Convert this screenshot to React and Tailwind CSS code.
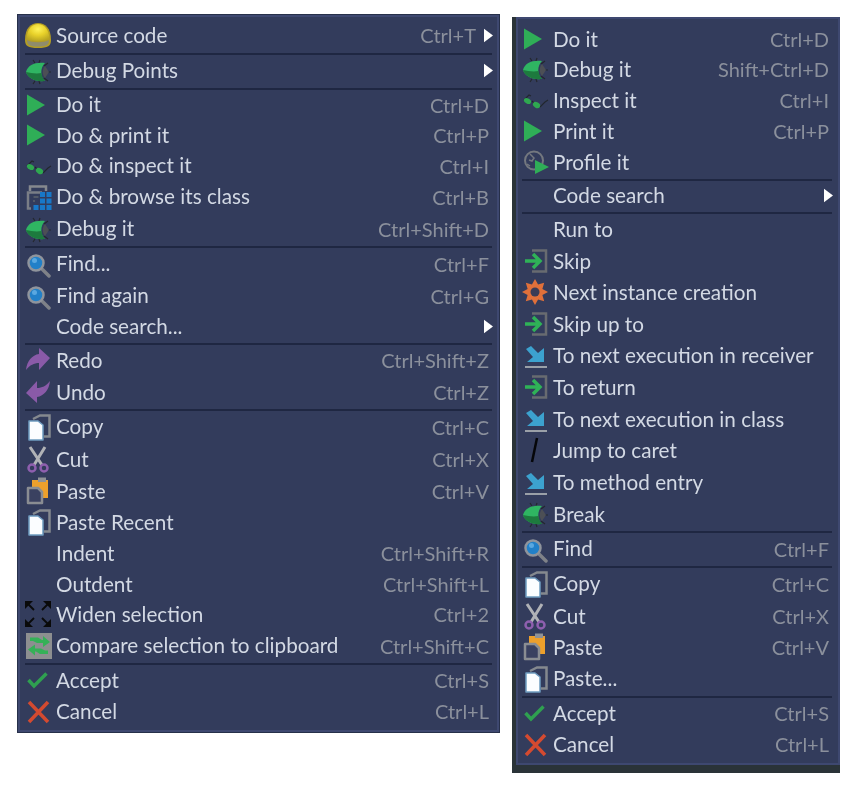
import React from "react";

const Play = () => (
  <svg viewBox="0 0 28 28" className="w-7 h-7">
    <path d="M3 3.500 L21 14 L3 24.500 Z" fill="#2fae57" />
  </svg>
);

const Bug = () => (
  <svg viewBox="0 0 28 28" className="w-7 h-7">
    <path d="M9 3 L11 6 M16 3 L15 6 M9 27 L11 24 M16 27 L15 24 M20 9 L24 6 M22 15 L27 15 M20 21 L24 24" stroke="#24282e" strokeWidth="1.200" fill="none" />
    <path d="M21 6 C11 5 4 8 2 15 C4 21 11 25 21 24 C16 20 16 11 21 6 Z" fill="#2fb562" />
    <path d="M2 15 C4 21 11 25 21 24 C19 22 18 19 17.500 16 C12 17 7 16 2 15 Z" fill="#1d7a3e" />
    <path d="M21 9 C18 12 18 18 21 21 L25 15 Z" fill="#4c4f55" />
  </svg>
);

const Glasses = () => (
  <svg viewBox="0 0 28 28" className="w-7 h-7">
    <path d="M3 14 L8 9 L10 10 M11 15 L13 17 M19 21 L24 16 L27 14" stroke="#22272e" strokeWidth="1.100" fill="none" />
    <ellipse cx="6.500" cy="15" rx="3.800" ry="2.600" fill="#2fa850" transform="rotate(30 6.500 15)" />
    <ellipse cx="15.500" cy="19" rx="3.800" ry="2.800" fill="#2fa850" transform="rotate(30 15.500 19)" />
  </svg>
);

const Browse = () => (
  <svg viewBox="0 0 28 28" className="w-7 h-7">
    <path d="M6 8 V3.500 H22 V8" fill="none" stroke="#85888e" strokeWidth="2.500" />
    <path d="M7 25.500 H4 V9.500 H18" fill="none" stroke="#7a7e86" strokeWidth="2.500" />
    <path d="M14.500 14 h-5 M11 18 h-2" stroke="#5f646c" strokeWidth="1.500" />
    <path d="M16 9 h5 v5 h-5 Z M22.500 9 h5 v5 h-5 Z M16 15.500 h5 v5 h-5 Z M22.500 15.500 h5 v5 h-5 Z M9.500 22 h5 v5 h-5 Z M16 22 h5 v5 h-5 Z M22.500 22 h5 v5 h-5 Z" fill="#1878c8" />
  </svg>
);

const Dome = () => (
  <svg viewBox="0 0 28 28" className="w-7 h-7">
    <defs>
      <radialGradient id="domeTop" cx="0.5" cy="0.3" r="0.7">
        <stop offset="0" stopColor="#fff35a" />
        <stop offset="0.5" stopColor="#e8d12a" />
        <stop offset="1" stopColor="#b9a522" />
      </radialGradient>
    </defs>
    <path d="M1 19 C1 7 7 2 14 2 C21 2 27 7 27 19 C27 25 24 27 14 27 C4 27 1 25 1 19 Z" fill="#b39d24" />
    <path d="M2.500 18 C3 8 8 3 14 3 C20 3 25 8 25.500 18 C20 21 8 21 2.500 18 Z" fill="url(#domeTop)" />
    <path d="M3 19 C8 22 20 22 25 19 C25 24 22 25.500 14 25.500 C6 25.500 3 24 3 19 Z" fill="#8f8c6c" />
  </svg>
);

const Magnifier = () => (
  <svg viewBox="0 0 28 28" className="w-7 h-7">
    <path d="M17 18 L25 26" stroke="#7f8288" strokeWidth="3.500" strokeLinecap="round" />
    <circle cx="12" cy="13" r="7.500" fill="#2280c8" stroke="#8f949c" strokeWidth="2.500" />
    <circle cx="10.500" cy="10.500" r="2.500" fill="#5aa8e0" />
  </svg>
);

const Redo = () => (
  <svg viewBox="0 0 28 28" className="w-7 h-7">
    <path d="M15 2 L26 12 L15 24 V17 C10 17 6 19 2 24 C3 15 8 9 15 8 Z" fill="#8a5aa8" />
  </svg>
);

const Undo = () => (
  <svg viewBox="0 0 28 28" className="w-7 h-7">
    <path d="M13 25 L2 15 L13 3 V10 C18 10 22 8 26 3 C25 12 20 18 13 19 Z" fill="#8a5aa8" />
  </svg>
);

const Copy = () => (
  <svg viewBox="0 0 28 28" className="w-7 h-7">
    <path d="M9 6 L16 2.500 H25.500 V23.500 H20" fill="none" stroke="#85898f" strokeWidth="2.500" />
    <path d="M5 8 H14 L19 12 V27 H5 Z" fill="#fbfdff" stroke="#6f9cc0" strokeWidth="1.500" strokeLinejoin="round" />
  </svg>
);

const Cut = () => (
  <svg viewBox="0 0 28 28" className="w-7 h-7">
    <path d="M6 2 L18 20 M21 2 L10 20" stroke="#b0b2b6" strokeWidth="3" />
    <circle cx="8" cy="23" r="3.500" fill="none" stroke="#8e5fae" strokeWidth="2.500" />
    <circle cx="20" cy="23" r="3.500" fill="none" stroke="#8e5fae" strokeWidth="2.500" />
  </svg>
);

const Paste = () => (
  <svg viewBox="0 0 28 28" className="w-7 h-7">
    <path d="M8 3 H24 V21 H8 Z" fill="#eda02c" />
    <path d="M14 0.500 H22 V5 H14 Z" fill="#8f9296" />
    <path d="M4 11 H14 L18 15 V26 H4 Z" fill="#3a4160" stroke="#8a8d92" strokeWidth="2.500" strokeLinejoin="round" />
  </svg>
);

const Widen = () => (
  <svg viewBox="0 0 28 28" className="w-7 h-7">
    <path d="M1 1 H9 L1 9 Z M27 1 H19 L27 9 Z M1 27 H9 L1 19 Z M27 27 H19 L27 19 Z" fill="#0a0a0a" />
    <path d="M4 4 L10 10 M24 4 L18 10 M4 24 L10 18 M24 24 L18 18" stroke="#0a0a0a" strokeWidth="1.800" />
  </svg>
);

const Compare = () => (
  <svg viewBox="0 0 28 28" className="w-7 h-7">
    <rect x="2" y="1" width="26" height="26" fill="#8d8f90" />
    <path d="M6 5.500 H14 L18 8 H19 V4 L26 10 L19 15 V11 H13 L9 9 H6 Z" fill="#35b157" />
    <path d="M24 22 H16 L12 19.500 H11 V23.500 L4 17.500 L11 12.500 V16.500 H17 L21 18.500 H24 Z" fill="#35b157" />
  </svg>
);

const Check = () => (
  <svg viewBox="0 0 28 28" className="w-7 h-7">
    <path d="M4.500 14 L10 20 L22.500 7.500" fill="none" stroke="#2fa050" strokeWidth="3.500" />
  </svg>
);

const Cross = () => (
  <svg viewBox="0 0 28 28" className="w-7 h-7">
    <path d="M5 5 L24 25 M24 5 L5 25" fill="none" stroke="#d44a30" strokeWidth="3.500" />
  </svg>
);

const Profile = () => (
  <svg viewBox="0 0 28 28" className="w-7 h-7">
    <circle cx="13" cy="12.500" r="9" fill="none" stroke="#74787f" strokeWidth="2" />
    <path d="M9 6 L13 10 L11 13 L8 12 M6 16 L9 18" fill="none" stroke="#74787f" strokeWidth="1.500" />
    <path d="M14 12 L28 19 L14 26 Z" fill="#2fae57" />
  </svg>
);

const Skip = () => (
  <svg viewBox="0 0 28 28" className="w-7 h-7">
    <path d="M11 3.500 H25 V24.500 H11" fill="none" stroke="#686b70" strokeWidth="2.500" />
    <path d="M4 14 H19 M12 7 L19 14 L12 21" fill="none" stroke="#2fb257" strokeWidth="3.500" />
  </svg>
);

const gearPoints = Array.from({ length: 16 }, (_, i) => {
  const r = i % 2 === 0 ? 13 : 8;
  const a = (i * Math.PI) / 8 - Math.PI / 2;
  return `${14 + r * Math.cos(a)},${14 + r * Math.sin(a)}`;
}).join(" ");

const Gear = () => (
  <svg viewBox="0 0 28 28" className="w-7 h-7">
    <polygon points={gearPoints} fill="#e0703a" />
    <circle cx="14" cy="14" r="4.500" fill="#3a3c56" />
  </svg>
);

const NextExec = () => (
  <svg viewBox="0 0 28 28" className="w-7 h-7">
    <path d="M5 8 L10 5 L17 12 L23 7 V21 H6 L12 16 Z" fill="#3ca2cf" />
    <path d="M4 26 H26" stroke="#9aa0a8" strokeWidth="2" />
  </svg>
);

const Caret = () => (
  <svg viewBox="0 0 28 28" className="w-7 h-7">
    <path d="M16 2 L11 26" stroke="#05060a" strokeWidth="2.500" />
  </svg>
);

const Arrow = () => (
  <svg viewBox="0 0 10 15" className="w-[9px] h-[15px]">
    <path d="M0 0 L10 7.500 L0 15 Z" fill="#ffffff" />
  </svg>
);

const leftMenu = [
  [{ h: "h-[34px]", icon: Dome, label: "Source code", keys: "Ctrl+T", sub: true }],
  [{ h: "h-[33px]", icon: Bug, label: "Debug Points", sub: true }],
  [
    { h: "h-[31px]", icon: Play, label: "Do it", keys: "Ctrl+D" },
    { h: "h-[30px]", icon: Play, label: "Do & print it", keys: "Ctrl+P" },
    { h: "h-[31px]", icon: Glasses, label: "Do & inspect it", keys: "Ctrl+I" },
    { h: "h-[31px]", icon: Browse, label: "Do & browse its class", keys: "Ctrl+B" },
    { h: "h-[33px]", icon: Bug, label: "Debug it", keys: "Ctrl+Shift+D" },
  ],
  [
    { h: "h-[33px]", icon: Magnifier, label: "Find...", keys: "Ctrl+F" },
    { h: "h-[31px]", icon: Magnifier, label: "Find again", keys: "Ctrl+G" },
    { h: "h-[31px]", label: "Code search...", sub: true },
  ],
  [
    { h: "h-[32px]", icon: Redo, label: "Redo", keys: "Ctrl+Shift+Z" },
    { h: "h-[32px]", icon: Undo, label: "Undo", keys: "Ctrl+Z" },
  ],
  [
    { h: "h-[33px]", icon: Copy, label: "Copy", keys: "Ctrl+C" },
    { h: "h-[32px]", icon: Cut, label: "Cut", keys: "Ctrl+X" },
    { h: "h-[32px]", icon: Paste, label: "Paste", keys: "Ctrl+V" },
    { h: "h-[30px]", icon: Copy, label: "Paste Recent" },
    { h: "h-[32px]", label: "Indent", keys: "Ctrl+Shift+R" },
    { h: "h-[30px]", label: "Outdent", keys: "Ctrl+Shift+L" },
    { h: "h-[30px]", icon: Widen, label: "Widen selection", keys: "Ctrl+2" },
    { h: "h-[33px]", icon: Compare, label: "Compare selection to clipboard", keys: "Ctrl+Shift+C" },
  ],
  [
    { h: "h-[32px]", icon: Check, label: "Accept", keys: "Ctrl+S" },
    { h: "h-[30px]", icon: Cross, label: "Cancel", keys: "Ctrl+L" },
  ],
];

const rightMenu = [
  [
    { h: "h-[30px]", icon: Play, label: "Do it", keys: "Ctrl+D" },
    { h: "h-[30px]", icon: Bug, label: "Debug it", keys: "Shift+Ctrl+D" },
    { h: "h-[32px]", icon: Glasses, label: "Inspect it", keys: "Ctrl+I" },
    { h: "h-[30px]", icon: Play, label: "Print it", keys: "Ctrl+P" },
    { h: "h-[32px]", icon: Profile, label: "Profile it" },
  ],
  [{ h: "h-[31px]", label: "Code search", sub: true }],
  [
    { h: "h-[33px]", label: "Run to" },
    { h: "h-[30px]", icon: Skip, label: "Skip" },
    { h: "h-[32px]", icon: Gear, label: "Next instance creation" },
    { h: "h-[32px]", icon: Skip, label: "Skip up to" },
    { h: "h-[30px]", icon: NextExec, label: "To next execution in receiver" },
    { h: "h-[34px]", icon: Skip, label: "To return" },
    { h: "h-[30px]", icon: NextExec, label: "To next execution in class" },
    { h: "h-[32px]", icon: Caret, label: "Jump to caret" },
    { h: "h-[32px]", icon: NextExec, label: "To method entry" },
    { h: "h-[32px]", icon: Bug, label: "Break" },
  ],
  [{ h: "h-[33px]", icon: Magnifier, label: "Find", keys: "Ctrl+F" }],
  [
    { h: "h-[33px]", icon: Copy, label: "Copy", keys: "Ctrl+C" },
    { h: "h-[32px]", icon: Cut, label: "Cut", keys: "Ctrl+X" },
    { h: "h-[30px]", icon: Paste, label: "Paste", keys: "Ctrl+V" },
    { h: "h-[33px]", icon: Copy, label: "Paste..." },
  ],
  [
    { h: "h-[32px]", icon: Check, label: "Accept", keys: "Ctrl+S" },
    { h: "h-[30px]", icon: Cross, label: "Cancel", keys: "Ctrl+L" },
  ],
];

function Row({ item }) {
  const Icon = item.icon;
  return (
    <div className={`flex items-center pb-[2px] ${item.h}`}>
      <div className="w-7 h-7 shrink-0">{Icon && <Icon />}</div>
      <span className="ml-1 flex-1 whitespace-nowrap text-[#d3d9e4]">{item.label}</span>
      {item.keys && <span className="whitespace-nowrap text-[#8b909c] text-[20px]">{item.keys}</span>}
      {item.sub ? (
        <span className="w-[18px] pr-[1px] flex justify-end shrink-0">
          <Arrow />
        </span>
      ) : (
        <span className="w-[5px] shrink-0" />
      )}
    </div>
  );
}

function Menu({ groups }) {
  return groups.map((rows, i) => (
    <div key={i}>
      {i > 0 && <div className="h-[2px] mr-[2px] ml-[1px] bg-[#1f2742]" />}
      {rows.map((item) => (
        <Row key={item.label} item={item} />
      ))}
    </div>
  ));
}

export default function App() {
  return (
    <div className="flex items-start bg-white w-[857px] h-[789px] overflow-hidden font-['Lato',sans-serif] text-[20.7px] leading-none blur-[0.4px]">
      <div className="ml-[17px] mt-[14px] w-[483px] h-[719px] bg-[#333c5c] border border-[#27304a]">
        <div className="h-full border-2 border-[#3e4870] pl-1 pr-[3px] pt-[2px]">
          <Menu groups={leftMenu} />
        </div>
      </div>
      <div className="ml-[12px] mt-[17px] w-[328px] h-[756px] bg-[#2a3338] pl-1 pb-2">
        <div className="h-full bg-[#333c5c] border-2 border-[#3e4870] pl-[3px] pr-[4px] pt-[6px]">
          <Menu groups={rightMenu} />
        </div>
      </div>
    </div>
  );
}
